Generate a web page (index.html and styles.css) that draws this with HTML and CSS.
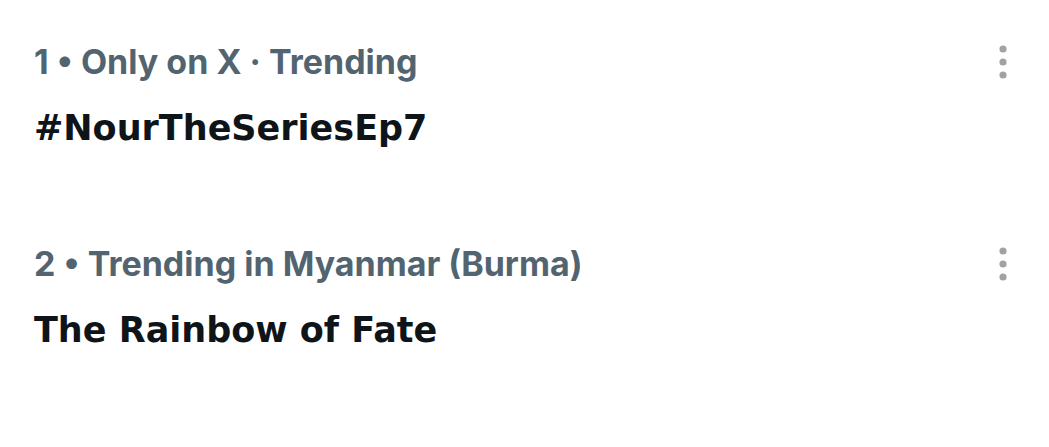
FILE: index.html
```html
<!DOCTYPE html>
<html>
<head>
<meta charset="utf-8">
<link rel="stylesheet" href="styles.css">
</head>
<body>
<div class="list">
  <div class="trend">
    <div class="meta-row">
      <span class="meta">1 • Only on X · Trending</span>
      <svg class="more" width="10" height="34" viewBox="0 0 10 34"><circle cx="5" cy="4" r="3.6"/><circle cx="5" cy="17" r="3.6"/><circle cx="5" cy="30" r="3.6"/></svg>
    </div>
    <div class="title">#NourTheSeriesEp7</div>
  </div>
  <div class="trend">
    <div class="meta-row">
      <span class="meta">2 • Trending in Myanmar (Burma)</span>
      <svg class="more" width="10" height="34" viewBox="0 0 10 34"><circle cx="5" cy="4" r="3.6"/><circle cx="5" cy="17" r="3.6"/><circle cx="5" cy="30" r="3.6"/></svg>
    </div>
    <div class="title">The Rainbow of Fate</div>
  </div>
</div>
</body>
</html>
```
FILE: styles.css
```css
html, body {
  margin: 0;
  background: #ffffff;
}
body {
  font-family: "Inter", sans-serif;
}
.list {
  display: flex;
  flex-direction: column;
  gap: 40px;
  padding: 38px 41px 0 34px;
}
.trend {
  display: flex;
  flex-direction: column;
  height: 162px;
}
.meta-row {
  display: flex;
  justify-content: space-between;
  align-items: flex-start;
}
.meta {
  font-family: "Inter", sans-serif;
  font-size: 34px;
  font-weight: 700;
  color: #536471;
  line-height: 48px;
}
.more {
  fill: #a0a3a6;
  margin-top: 7px;
}
.title {
  margin-top: 18px;
  font-family: "DejaVu Sans", sans-serif;
  font-size: 35px;
  font-weight: 700;
  color: #0f1419;
  line-height: 48px;
}
```
